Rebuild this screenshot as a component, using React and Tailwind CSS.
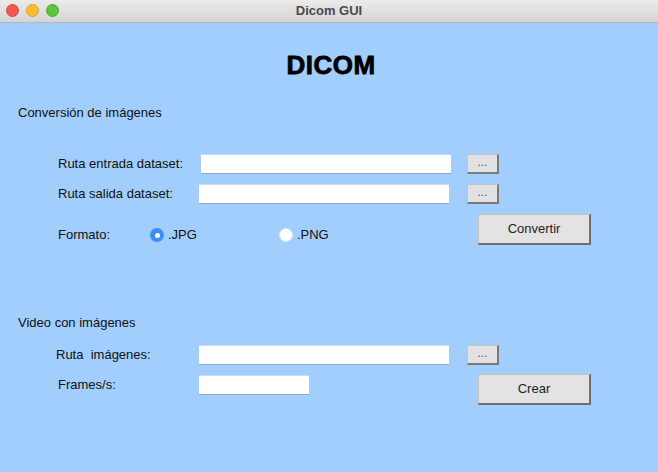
import React from "react";

const font = { fontFamily: '"Liberation Sans", Arial, sans-serif' };

function Dots() {
  return (
    <button
      type="button"
      className="ml-[16px] w-[32px] h-[20px] bg-[#e2e2e2] border border-[#c4c4c4] border-b-2 border-r-2 border-b-[#7a7a7a] border-r-[#7a7a7a] text-[12px] leading-none text-[#555] flex items-center justify-center pb-[3px]"
    >
      ...
    </button>
  );
}

function Field({ w = "w-[250px]" }) {
  return <div className={`${w} h-[20px] bg-white border-b border-b-[#8fa9c6] border-t border-t-[#c9dcef]`} />;
}

function BigButton({ children }) {
  return (
    <button
      type="button"
      className="w-[113px] h-[31px] bg-[#e3e3e3] border border-[#c2c2c2] border-b-2 border-r-2 border-b-[#6f6f6f] border-r-[#6f6f6f] text-[13px] text-[#222] flex items-center justify-center"
    >
      {children}
    </button>
  );
}

function Radio({ checked, label, className }) {
  return (
    <div className={`flex items-center ${className}`}>
      {checked ? (
        <span className="w-[14px] h-[14px] rounded-full bg-[#3b8ff6] flex items-center justify-center">
          <span className="w-[5px] h-[5px] rounded-full bg-white" />
        </span>
      ) : (
        <span className="w-[14px] h-[14px] rounded-full bg-white border border-[#d8e4f0]" />
      )}
      <span className="ml-[4px] text-[13px] text-[#111]">{label}</span>
    </div>
  );
}

export default function App() {
  return (
    <div className="w-[658px] h-[472px] flex flex-col overflow-hidden" style={font}>
      {/* Title bar */}
      <div className="h-[23px] relative flex items-center justify-center bg-gradient-to-b from-[#ebebeb] to-[#d5d5d5] border-b border-[#b8b8b8]">
        <div className="absolute left-[6px] top-[4px] flex gap-[7px]">
          <span className="w-[13px] h-[13px] rounded-full bg-[#ee5a52] border border-[#d9463f]" />
          <span className="w-[13px] h-[13px] rounded-full bg-[#f6bd35] border border-[#dea228]" />
          <span className="w-[13px] h-[13px] rounded-full bg-[#5ec440] border border-[#4aa932]" />
        </div>
        <span className="text-[13px] font-bold text-[#4a4a4a]">Dicom GUI</span>
      </div>

      {/* Body */}
      <div className="flex-1 bg-[#a2cefd] text-[#111]">
        <h1 className="mt-[27px] h-[30px] text-center text-[26px] leading-[30px] font-bold text-black tracking-[0.5px] pl-[4px] [-webkit-text-stroke:0.8px_black]">
          DICOM
        </h1>

        <p className="mt-[25px] ml-[18px] h-[16px] text-[13px] leading-[16px]">Conversión de imágenes</p>

        {/* Row 1 */}
        <div className="mt-[33px] flex items-center h-[20px] pl-[58px]">
          <span className="w-[143px] text-[13px]">Ruta entrada dataset:</span>
          <Field />
          <Dots />
        </div>

        {/* Row 2 */}
        <div className="mt-[10px] flex items-center h-[20px] pl-[58px]">
          <span className="w-[141px] text-[13px]">Ruta salida dataset:</span>
          <Field />
          <span className="w-[2px]" />
          <Dots />
        </div>

        {/* Row 3 */}
        <div className="mt-[10px] flex items-start h-[31px] pl-[58px]">
          <div className="mt-[13px] flex items-center h-[16px]">
            <span className="w-[92px] text-[13px]">Formato:</span>
            <Radio checked label=".JPG" />
            <Radio label=".PNG" className="ml-[82px]" />
          </div>
          <div className="ml-auto mr-[67px]">
            <BigButton>Convertir</BigButton>
          </div>
        </div>

        <p className="mt-[70px] ml-[18px] h-[16px] text-[13px] leading-[16px]">Video con imágenes</p>

        {/* Row 4 */}
        <div className="mt-[14px] flex items-center h-[20px] pl-[56px]">
          <span className="w-[143px] text-[13px] whitespace-pre">{"Ruta  imágenes:"}</span>
          <Field />
          <span className="w-[2px]" />
          <Dots />
        </div>

        {/* Row 5 */}
        <div className="mt-[9px] flex items-start h-[31px] pl-[58px]">
          <div className="mt-[1px] flex items-center h-[20px]">
            <span className="w-[141px] text-[13px]">Frames/s:</span>
            <Field w="w-[110px]" />
          </div>
          <div className="ml-auto mr-[67px]">
            <BigButton>Crear</BigButton>
          </div>
        </div>
      </div>
    </div>
  );
}
